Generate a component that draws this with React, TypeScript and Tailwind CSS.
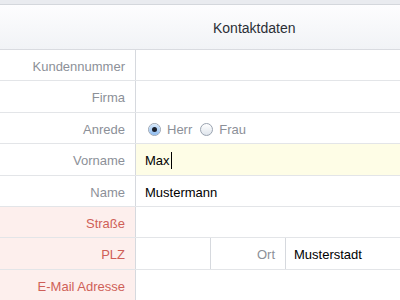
import React from "react";

type Row = {
  label: string;
};

const font = { fontFamily: '"Liberation Sans", Arial, sans-serif' };

function Radio({ checked }: { checked?: boolean }) {
  return (
    <span className="relative inline-flex h-[13px] w-[13px] items-center justify-center rounded-full border border-[#9aa3b0] bg-gradient-to-b from-[#ffffff] to-[#dfe5ec]">
      {checked ? (
        <>
          <span className="absolute inset-0 rounded-full bg-gradient-to-b from-[#d5e8fb] to-[#8fbcef]" />
          <span className="relative h-[5px] w-[5px] rounded-full bg-[#1a1f2b]" />
        </>
      ) : null}
    </span>
  );
}

function Label({ text, required }: { text: string; required?: boolean }) {
  return (
    <div
      className={`flex w-[136px] shrink-0 items-center justify-end border-r border-[#d6d9de] pt-[3px] pr-[10px] text-[13px] ${
        required ? "bg-[#fdefed] text-[#cf5f58]" : "text-[#8c9098]"
      }`}
    >
      {text}
    </div>
  );
}

export default function App() {
  const rows: Row[] = [{ label: "Kundennummer" }, { label: "Firma" }];

  return (
    <div className="h-[300px] w-[400px] overflow-hidden bg-white" style={font}>
      <div className="h-[5px] border-b border-[#d4d7dc] bg-[#e9ebef]" />
      <div className="flex h-[45px] items-center border-b border-[#d9dbe0] bg-gradient-to-b from-[#fdfdfe] to-[#f1f3f6] pt-[3px] pl-[213px] text-[14px] text-[#2b2f36]">
        Kontaktdaten
      </div>

      {rows.map((r) => (
        <div key={r.label} className="flex h-[31.4px] border-b border-[#e3e5e8]">
          <Label text={r.label} />
          <div className="flex-1" />
        </div>
      ))}

      <div className="flex h-[31.4px] border-b border-[#e3e5e8]">
        <Label text="Anrede" />
        <div className="flex flex-1 items-center pt-[3px] pl-[12px] text-[13px] text-[#8c9098]">
          <Radio checked />
          <span className="ml-[6px]">Herr</span>
          <span className="ml-[8px] flex items-center">
            <Radio />
            <span className="ml-[6px]">Frau</span>
          </span>
        </div>
      </div>

      <div className="flex h-[31.4px] border-b border-[#e3e5e8]">
        <Label text="Vorname" />
        <div className="flex flex-1 items-center bg-[#fefde6] pt-[3px] pl-[9px] text-[13px] text-black">
          Max
          <span className="ml-[1px] h-[17px] w-[1px] bg-black" />
        </div>
      </div>

      <div className="flex h-[31.4px] border-b border-[#e3e5e8]">
        <Label text="Name" />
        <div className="flex flex-1 items-center pt-[3px] pl-[9px] text-[13px] text-black">Mustermann</div>
      </div>

      <div className="flex h-[31.4px] border-b border-[#e3e5e8]">
        <Label text="Straße" required />
        <div className="flex-1" />
      </div>

      <div className="flex h-[31.4px] border-b border-[#e3e5e8]">
        <Label text="PLZ" required />
        <div className="w-[75px] shrink-0 border-r border-[#d6d9de]" />
        <div className="flex w-[75px] shrink-0 items-center justify-end border-r border-[#d6d9de] pt-[3px] pr-[10px] text-[13px] text-[#8c9098]">
          Ort
        </div>
        <div className="flex flex-1 items-center pt-[3px] pl-[8px] text-[13px] text-black">Musterstadt</div>
      </div>

      <div className="flex h-[31.4px] border-b border-[#e3e5e8]">
        <Label text="E-Mail Adresse" required />
        <div className="flex-1" />
      </div>
    </div>
  );
}
